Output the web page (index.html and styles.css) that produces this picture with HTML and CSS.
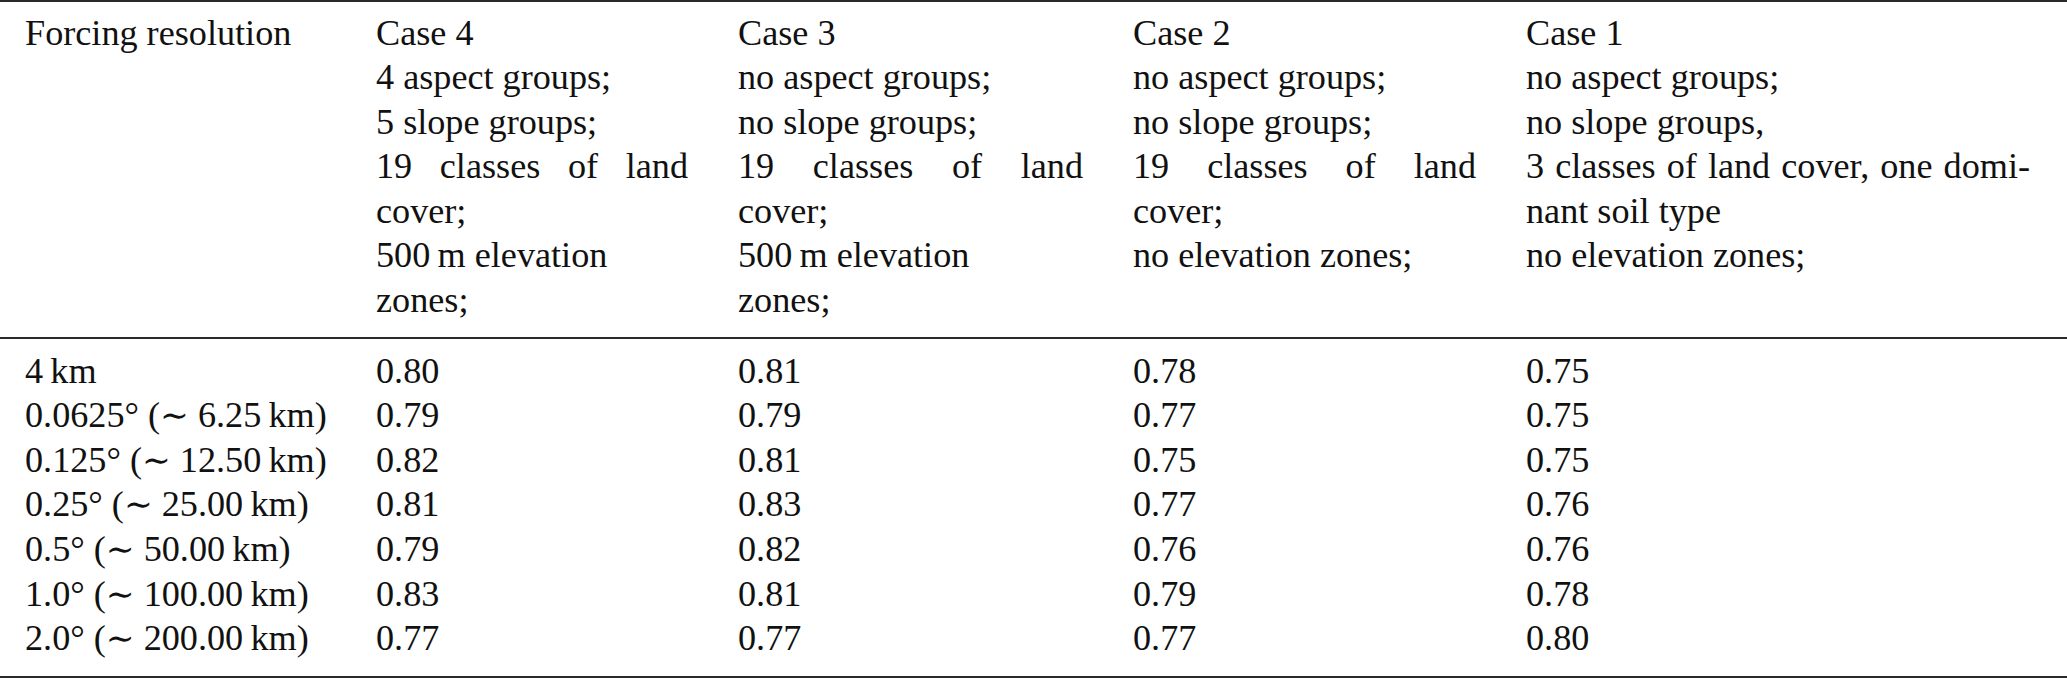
FILE: index.html
```html
<!DOCTYPE html>
<html lang="en">
<head>
<meta charset="utf-8">
<title>Forcing resolution table</title>
<link rel="stylesheet" href="styles.css">
</head>
<body>
<div class="table">
  <div class="grid head">
    <div class="cell"><div class="ln">Forcing resolution</div></div>
    <div class="cell">
      <div class="ln">Case 4</div>
      <div class="ln">4 aspect groups;</div>
      <div class="ln">5 slope groups;</div>
      <div class="ln jst">19 classes of land</div>
      <div class="ln">cover;</div>
      <div class="ln">500&thinsp;m elevation</div>
      <div class="ln">zones;</div>
    </div>
    <div class="cell">
      <div class="ln">Case 3</div>
      <div class="ln">no aspect groups;</div>
      <div class="ln">no slope groups;</div>
      <div class="ln jst">19 classes of land</div>
      <div class="ln">cover;</div>
      <div class="ln">500&thinsp;m elevation</div>
      <div class="ln">zones;</div>
    </div>
    <div class="cell">
      <div class="ln">Case 2</div>
      <div class="ln">no aspect groups;</div>
      <div class="ln">no slope groups;</div>
      <div class="ln jst">19 classes of land</div>
      <div class="ln">cover;</div>
      <div class="ln">no elevation zones;</div>
    </div>
    <div class="cell">
      <div class="ln">Case 1</div>
      <div class="ln">no aspect groups;</div>
      <div class="ln">no slope groups,</div>
      <div class="ln jst">3 classes of land cover, one domi-</div>
      <div class="ln">nant soil type</div>
      <div class="ln">no elevation zones;</div>
    </div>
  </div>
  <div class="grid body">
    <div class="cell">4&thinsp;km</div><div class="cell">0.80</div><div class="cell">0.81</div><div class="cell">0.78</div><div class="cell">0.75</div>
    <div class="cell">0.0625° (<span class="sim">∼</span> 6.25&thinsp;km)</div><div class="cell">0.79</div><div class="cell">0.79</div><div class="cell">0.77</div><div class="cell">0.75</div>
    <div class="cell">0.125° (<span class="sim">∼</span> 12.50&thinsp;km)</div><div class="cell">0.82</div><div class="cell">0.81</div><div class="cell">0.75</div><div class="cell">0.75</div>
    <div class="cell">0.25° (<span class="sim">∼</span> 25.00&thinsp;km)</div><div class="cell">0.81</div><div class="cell">0.83</div><div class="cell">0.77</div><div class="cell">0.76</div>
    <div class="cell">0.5° (<span class="sim">∼</span> 50.00&thinsp;km)</div><div class="cell">0.79</div><div class="cell">0.82</div><div class="cell">0.76</div><div class="cell">0.76</div>
    <div class="cell">1.0° (<span class="sim">∼</span> 100.00&thinsp;km)</div><div class="cell">0.83</div><div class="cell">0.81</div><div class="cell">0.79</div><div class="cell">0.78</div>
    <div class="cell">2.0° (<span class="sim">∼</span> 200.00&thinsp;km)</div><div class="cell">0.77</div><div class="cell">0.77</div><div class="cell">0.77</div><div class="cell">0.80</div>
  </div>
</div>
</body>
</html>
```

FILE: styles.css
```css
html, body {
  margin: 0;
  padding: 0;
  background: #ffffff;
}

body {
  font-family: "Liberation Serif", "Times New Roman", "DejaVu Serif", serif;
  font-size: 36.2px;
  line-height: 44.57px;
  color: #111111;
}

.table {
  width: 2067px;
  border-top: 2px solid #2a2a2a;
  border-bottom: 2px solid #2a2a2a;
}

.grid {
  display: grid;
  grid-template-columns: 301px 312px 345px 343px 504px;
  column-gap: 50px;
  padding-left: 25px;
}

.head {
  padding-top: 8.5px;
  padding-bottom: 14.5px;
  border-bottom: 2px solid #2a2a2a;
  align-items: start;
}

.body {
  padding-top: 9.8px;
  padding-bottom: 15px;
}

.cell {
  white-space: nowrap;
}

.ln {
  white-space: nowrap;
}

.ln.jst {
  white-space: normal;
  text-align: justify;
  text-align-last: justify;
}

.sim {
  font-family: "DejaVu Serif", "Liberation Serif", serif;
  font-size: 0.95em;
}
```
